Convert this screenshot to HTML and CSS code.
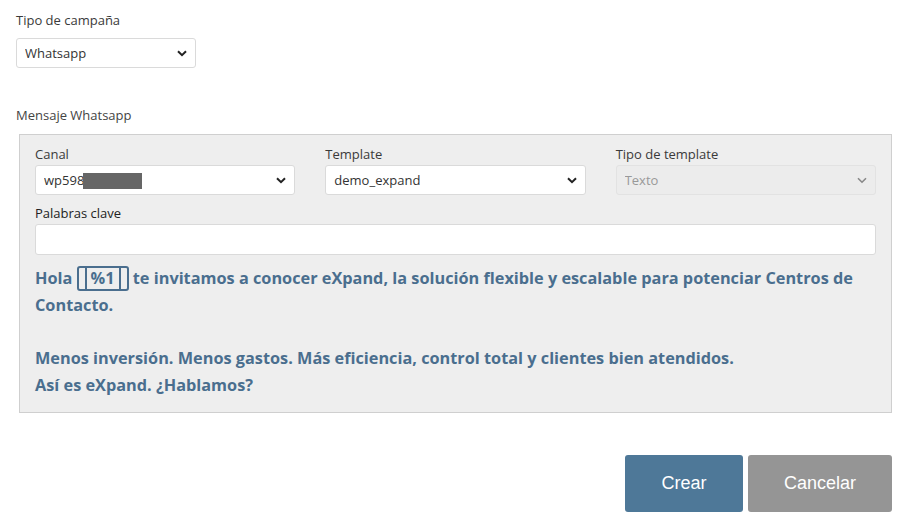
FILE: index.html
```html
<!DOCTYPE html>
<html lang="es">
<head>
<meta charset="utf-8">
<title>Campaña</title>
<link rel="stylesheet" href="styles.css">
</head>
<body>
<div class="page">
  <div class="field campaign">
    <label class="label" for="tipo">Tipo de campaña</label>
    <div class="select-wrap">
      <select id="tipo" class="select"><option>Whatsapp</option></select>
      <svg class="chev" viewBox="0 0 10 7" width="10" height="7"><path d="M1 1.2 L5 5.2 L9 1.2" fill="none" stroke="#222" stroke-width="2"/></svg>
    </div>
  </div>

  <div class="section-title">Mensaje Whatsapp</div>
  <div class="panel">
    <div class="grid3">
      <div class="field">
        <label class="label" for="canal">Canal</label>
        <div class="select-wrap">
          <select id="canal" class="select"><option>wp598</option></select>
          <span class="redact"></span>
          <svg class="chev" viewBox="0 0 10 7" width="10" height="7"><path d="M1 1.2 L5 5.2 L9 1.2" fill="none" stroke="#222" stroke-width="2"/></svg>
        </div>
      </div>
      <div class="field">
        <label class="label" for="tpl">Template</label>
        <div class="select-wrap">
          <select id="tpl" class="select"><option>demo_expand</option></select>
          <svg class="chev" viewBox="0 0 10 7" width="10" height="7"><path d="M1 1.2 L5 5.2 L9 1.2" fill="none" stroke="#222" stroke-width="2"/></svg>
        </div>
      </div>
      <div class="field">
        <label class="label" for="ttpl">Tipo de template</label>
        <div class="select-wrap">
          <select id="ttpl" class="select disabled" disabled><option>Texto</option></select>
          <svg class="chev" viewBox="0 0 10 7" width="10" height="7"><path d="M1 1.2 L5 5.2 L9 1.2" fill="none" stroke="#888" stroke-width="1.6"/></svg>
        </div>
      </div>
    </div>
    <div class="field keywords">
      <label class="label dark" for="kw">Palabras clave</label>
      <input id="kw" class="input" type="text">
    </div>
    <div class="message">
      <p>Hola <span class="var"><span class="var-inner">%1</span></span> te invitamos a conocer eXpand, la solución flexible y escalable para potenciar Centros de Contacto.</p>
      <p class="gap">Menos inversión. Menos gastos. Más eficiencia, control total y clientes bien atendidos.<br>Así es eXpand. ¿Hablamos?</p>
    </div>
  </div>

  <div class="actions">
    <button class="btn primary">Crear</button>
    <button class="btn secondary">Cancelar</button>
  </div>
</div>
</body>
</html>
```

FILE: styles.css
```css
html, body {
  margin: 0;
  padding: 0;
  background: #fff;
}
body {
  font-family: "Open Sans", "Noto Sans", sans-serif;
  color: #333;
}
.page {
  padding: 10px 18px 0 16px;
}
.field {
  display: flex;
  flex-direction: column;
}
.label {
  font-size: 13px;
  color: #3a3a3a;
  line-height: 20px;
  margin-bottom: 8px;
}
.campaign {
  width: 180px;
}
.select-wrap {
  position: relative;
}
.select {
  appearance: none;
  -webkit-appearance: none;
  width: 100%;
  height: 30px;
  box-sizing: border-box;
  border: 1px solid #dadada;
  border-radius: 3px;
  background: #fff;
  font-family: inherit;
  font-size: 13px;
  color: #333;
  padding: 0 8px;
  margin: 0;
}
.select.disabled {
  background: #ececec;
  color: #999;
  border-color: #e2e2e2;
  opacity: 1;
}
.chev {
  position: absolute;
  right: 9px;
  top: 12px;
  pointer-events: none;
}
.redact {
  position: absolute;
  left: 48px;
  top: 8px;
  width: 59px;
  height: 16px;
  background: #666;
}
.section-title {
  margin-top: 37px;
  font-size: 13px;
  color: #444;
  line-height: 20px;
}
.panel {
  margin-top: 9px;
  margin-left: 3px;
  background: #eeeeee;
  border: 1px solid #cfcfcf;
  padding: 9px 15px 13px 15px;
}
.grid3 {
  display: grid;
  grid-template-columns: repeat(3, 1fr);
  column-gap: 30px;
}
.grid3 .label {
  margin-bottom: 1px;
}
.keywords {
  margin-top: 8px;
}
.keywords .label {
  margin-bottom: 1px;
  color: #222;
}
.input {
  height: 31px;
  box-sizing: border-box;
  border: 1px solid #dadada;
  border-radius: 3px;
  background: #fff;
}
.message {
  margin-top: 10px;
  color: #4a6e8e;
  font-weight: 700;
  font-size: 16.3px;
  line-height: 26.7px;
}
.message p {
  margin: 0;
}
.message .gap {
  margin-top: 26.7px;
}
.var {
  display: inline-block;
  border: 2px solid #4a6e8e;
  border-radius: 3px;
  padding: 0 6px;
  line-height: 21px;
  vertical-align: baseline;
  margin: -4px 0;
}
.var-inner {
  display: inline-block;
  border-left: 2px solid #4a6e8e;
  border-right: 2px solid #4a6e8e;
  padding: 0 4px;
}
.actions {
  display: flex;
  justify-content: flex-end;
  gap: 5px;
  margin-top: 42px;
}
.btn {
  height: 57px;
  border: none;
  border-radius: 3px;
  color: #fff;
  font-family: "Liberation Sans", Arial, sans-serif;
  font-size: 18px;
}
.primary {
  width: 118px;
  background: #4e7898;
}
.secondary {
  width: 144px;
  background: #959595;
}
```
